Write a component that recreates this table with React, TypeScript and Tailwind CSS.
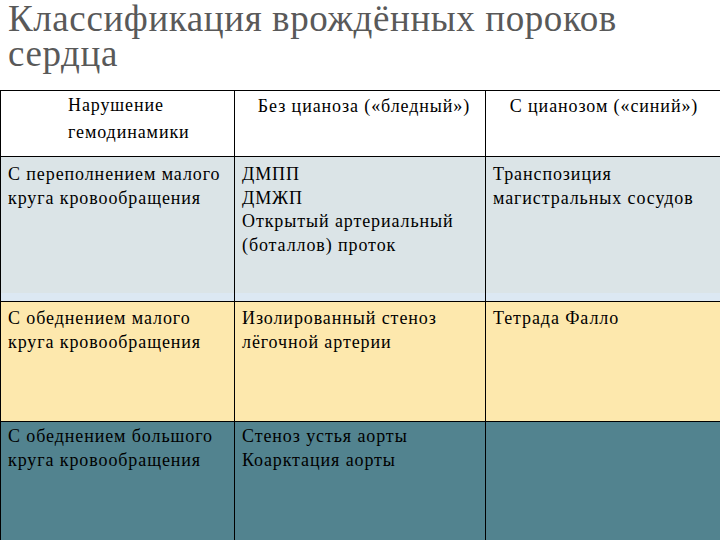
type Row = {
  bg: string;
  height: string;
  pad: string;
  cells: string[][];
  band?: boolean;
};

const rows: Row[] = [
  {
    bg: 'bg-[#dbe4e7]',
    height: 'h-[145px]',
    pad: 'pt-[6px]',
    band: true,
    cells: [
      ['С переполнением малого', 'круга кровообращения'],
      ['ДМПП', 'ДМЖП', 'Открытый артериальный', '(боталлов) проток'],
      ['Транспозиция', 'магистральных сосудов'],
    ],
  },
  {
    bg: 'bg-[#fde8ad]',
    height: 'h-[120px]',
    pad: 'pt-[5px]',
    cells: [
      ['С обеднением малого', 'круга кровообращения'],
      ['Изолированный стеноз', 'лёгочной артерии'],
      ['Тетрада Фалло'],
    ],
  },
  {
    bg: 'bg-[#52838f]',
    height: 'h-[130px]',
    pad: 'pt-[3px]',
    cells: [
      ['С обеднением большого', 'круга кровообращения'],
      ['Стеноз устья аорты', 'Коарктация аорты'],
      [],
    ],
  },
];

const cols = ['w-[234px]', 'w-[251px]', 'w-[237px]'];

export default function App() {
  return (
    <div className="w-[720px] h-[540px] overflow-hidden bg-white font-['Liberation_Serif','DejaVu_Serif',serif]">
      <h1 className="pl-[8px] pt-[1px] text-[37px] leading-[35px] text-[#595959] tracking-[0.6px]">
        Классификация врождённых пороков
        <br />
        сердца
      </h1>

      <div className="mt-[19px] w-[722px] border-t border-l border-black text-[18px] tracking-[0.9px] text-black">
        <div className="flex h-[66px] bg-white">
          <div className={`${cols[0]} shrink-0 border-r border-b border-black pl-[67px] pt-[1px] leading-[27px]`}>
            Нарушение
            <br />
            гемодинамики
          </div>
          <div className={`${cols[1]} shrink-0 border-r border-b border-black pt-[3px] text-center leading-[24px]`}>
            <span className="pl-[8px]">Без цианоза («бледный»)</span>
          </div>
          <div className={`${cols[2]} shrink-0 border-r border-b border-black pt-[3px] text-center leading-[24px]`}>
            С цианозом («синий»)
          </div>
        </div>

        {rows.map((row, i) => (
          <div key={i} className={`flex ${row.height} ${row.bg}`}>
            {row.cells.map((lines, j) => (
              <div
                key={j}
                className={`${cols[j]} shrink-0 flex flex-col border-r border-b border-black`}
              >
                <div className={`flex-1 pl-[7px] ${row.pad} leading-[23.5px]`}>
                  {lines.map((l) => (
                    <div key={l}>{l}</div>
                  ))}
                </div>
                {row.band && <div className="h-[8px] bg-[#dce8f3]" />}
              </div>
            ))}
          </div>
        ))}
      </div>
    </div>
  );
}
